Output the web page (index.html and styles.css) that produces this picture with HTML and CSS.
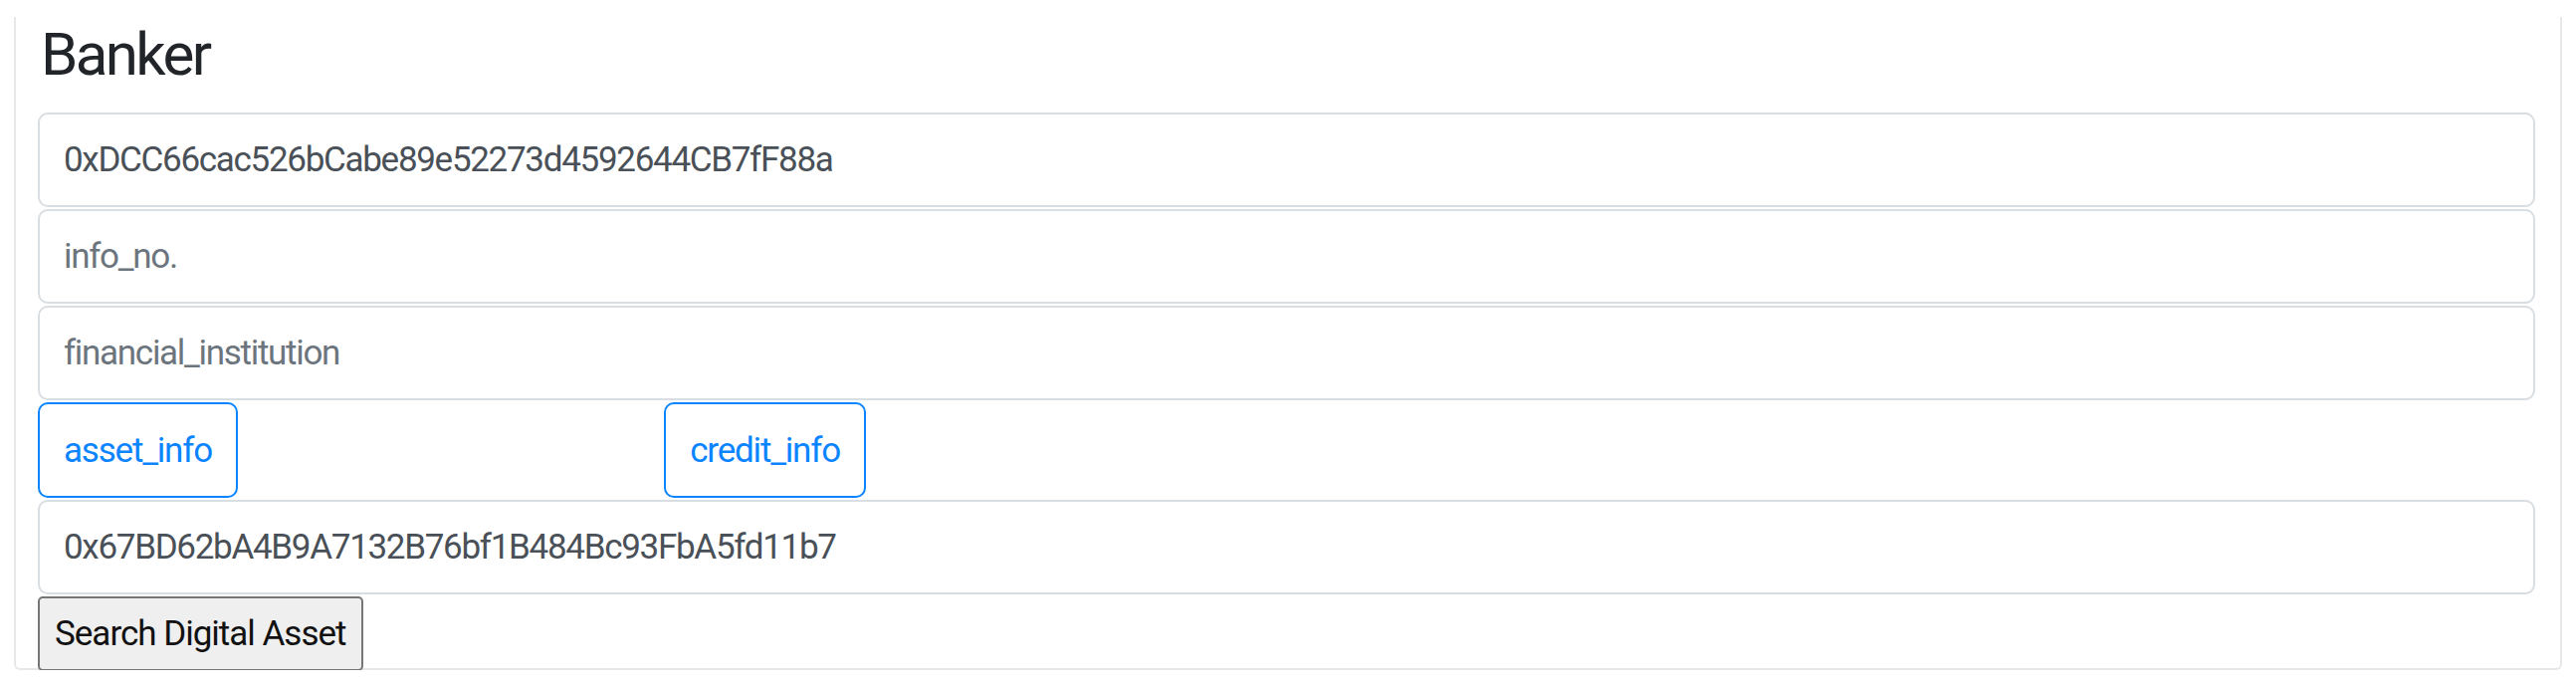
FILE: index.html
```html
<!DOCTYPE html>
<html lang="en">
<head>
    <meta charset="UTF-8">
    <meta name="viewport" content="width=device-width, initial-scale=1.0">
    <title>Banker</title>
    <link rel="stylesheet" href="styles.css">
</head>
<body>
    <div class="card">
        <h2 class="title">Banker</h2>
        <input type="text" class="field" value="0xDCC66cac526bCabe89e52273d4592644CB7fF88a">
        <input type="text" class="field" placeholder="info_no.">
        <input type="text" class="field" placeholder="financial_institution">
        <div class="choice-row">
            <div><button class="btn-outline">asset_info</button></div>
            <div><button class="btn-outline">credit_info</button></div>
        </div>
        <input type="text" class="field" value="0x67BD62bA4B9A7132B76bf1B484Bc93FbA5fd11b7">
        <button class="search">Search Digital Asset</button>
    </div>
</body>
</html>
```

FILE: styles.css
```css
body {
    margin: 0;
    background: #ffffff;
    font-family: Roboto, "Noto Sans", sans-serif;
    color: #212529;
}
.card {
    margin: 17px 14px 0 14px;
    padding: 0 25px 2px 22px;
    border: 2px solid #e8e8e8;
    border-top: none;
    border-radius: 0 0 6px 6px;
    height: 656px;
    box-sizing: border-box;
}
.title {
    margin: 0 0 20px 3px;
    font-size: 60px;
    font-weight: 400;
    letter-spacing: -2.6px;
    line-height: 76px;
    color: #212529;
}
.field {
    display: block;
    width: 100%;
    height: 95px;
    margin: 0 0 2px;
    padding: 0 24px;
    font-family: inherit;
    font-size: 35px;
    letter-spacing: -1.3px;
    color: #495057;
    background: #ffffff;
    border: 2px solid #d9dee3;
    border-radius: 10px;
    box-sizing: border-box;
    outline: none;
}
.field::placeholder {
    color: #6c757d;
}
.choice-row {
    display: grid;
    grid-template-columns: repeat(4, 1fr);
    column-gap: 8px;
    margin-bottom: 2px;
}
.btn-outline {
    height: 96px;
    padding: 0 24px;
    font-family: inherit;
    font-size: 35px;
    letter-spacing: -1.2px;
    color: #0a84ff;
    background: #ffffff;
    border: 2px solid #0a84ff;
    border-radius: 10px;
    cursor: pointer;
}
.search {
    display: block;
    height: 75px;
    padding: 0 15px;
    font-family: inherit;
    font-size: 35px;
    letter-spacing: -1px;
    color: #111111;
    background: #efefef;
    border: 2px solid #767676;
    border-radius: 5px;
    cursor: pointer;
}
```
